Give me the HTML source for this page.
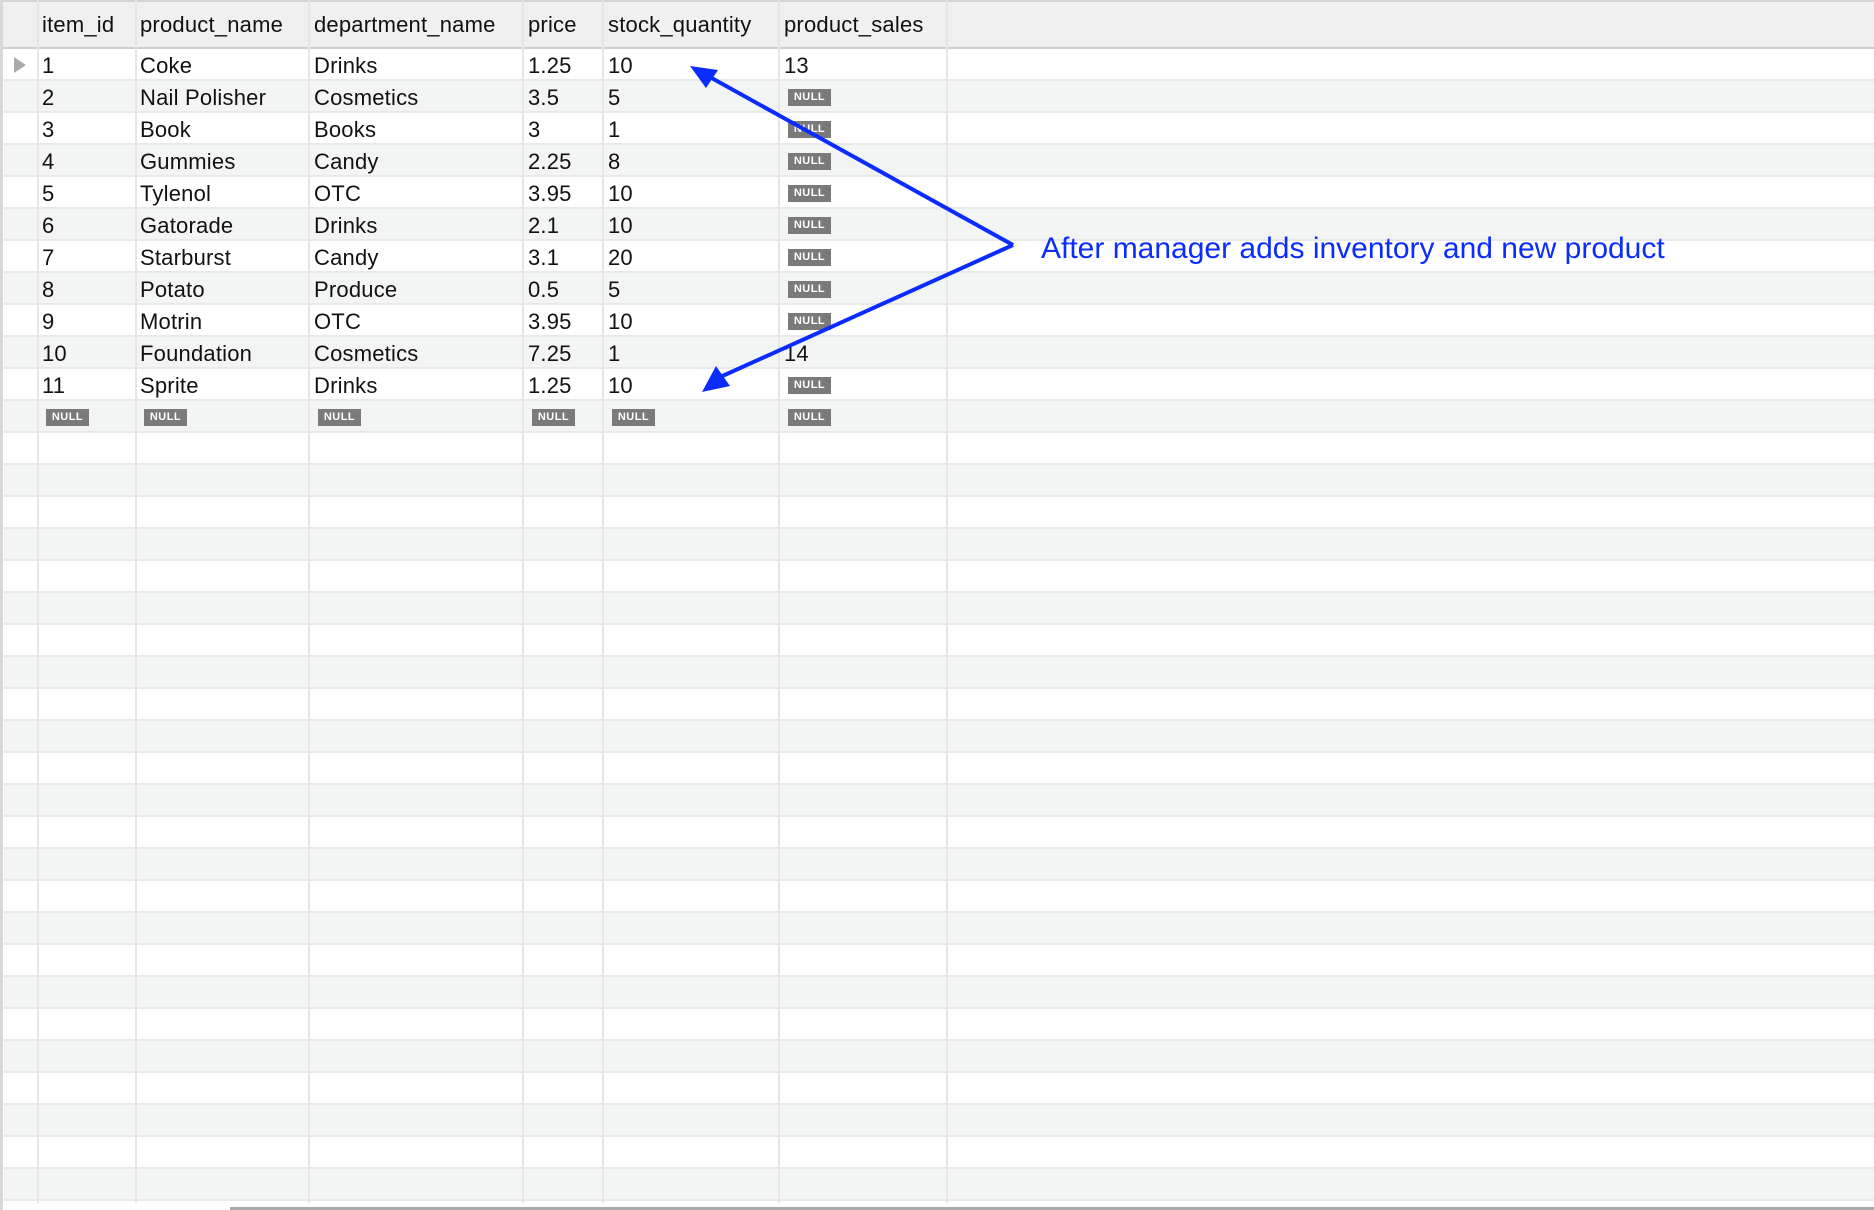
<!DOCTYPE html>
<html><head><meta charset="utf-8"><style>
body{margin:0;width:1874px;height:1210px;background:#fff;position:relative;overflow:hidden;font-family:"Liberation Sans",sans-serif;}
.hdr{position:absolute;left:0;top:0;width:1874px;height:49px;background:#f0f0f0;border-top:2px solid #d4d4d4;border-bottom:2px solid #cfcfcf;box-sizing:border-box}
.row{position:absolute;left:4px;width:1870px;height:32px;box-sizing:border-box;border-bottom:2px solid #e9e9e9}
.vl{position:absolute;width:2px;background:#e6e6e6;top:0}
.t{position:absolute;font-size:22px;color:#111;white-space:nowrap;letter-spacing:0.2px}
.n{position:absolute;background:#7a7a7a;color:#fff;font-size:11px;font-weight:bold;width:43px;height:17px;line-height:17px;text-align:center;letter-spacing:0.5px}
</style></head><body>
<div class="hdr"></div>
<div id="rows"></div>
<script>
var cols=[37,135,308,522,602,778,946];
var xs=[42,140,314,528,608,784];
var h='';
for(var i=0;i<36;i++){h+='<div class="row" style="top:'+(49+32*i)+'px;background:'+(i%2?'#f3f4f4':'#fff')+'"></div>';}
cols.forEach(function(c){h+='<div class="vl" style="left:'+c+'px;height:1203px"></div>';});
var hd=['item_id','product_name','department_name','price','stock_quantity','product_sales'];
hd.forEach(function(t,j){h+='<div class="t" style="left:'+xs[j]+'px;top:12px">'+t+'</div>';});
var d=[[1,'Coke','Drinks','1.25',10,13],[2,'Nail Polisher','Cosmetics','3.5',5,null],[3,'Book','Books','3',1,null],[4,'Gummies','Candy','2.25',8,null],[5,'Tylenol','OTC','3.95',10,null],[6,'Gatorade','Drinks','2.1',10,null],[7,'Starburst','Candy','3.1',20,null],[8,'Potato','Produce','0.5',5,null],[9,'Motrin','OTC','3.95',10,null],[10,'Foundation','Cosmetics','7.25',1,14],[11,'Sprite','Drinks','1.25',10,null],[null,null,null,null,null,null]];
d.forEach(function(r,i){var y=49+32*i;r.forEach(function(v,j){
 if(v===null){h+='<div class="n" style="left:'+(xs[j]+4)+'px;top:'+(y+8)+'px">NULL</div>';}
 else h+='<div class="t" style="left:'+xs[j]+'px;top:'+(y+4)+'px">'+v+'</div>';});});
document.getElementById('rows').innerHTML=h;
</script>
<div style="position:absolute;left:0;top:0;width:3px;height:1210px;background:#d8d8d8"></div>
<div style="position:absolute;left:14px;top:57px;width:0;height:0;border-left:12px solid #aaa;border-top:8px solid transparent;border-bottom:8px solid transparent"></div>
<div style="position:absolute;left:230px;top:1207px;width:1644px;height:3px;background:#aaa"></div>
<svg style="position:absolute;left:0;top:0" width="1874" height="1210">
<line x1="1013" y1="245" x2="708" y2="76" stroke="#0a2cff" stroke-width="4"/>
<line x1="1013" y1="245" x2="718" y2="378" stroke="#0a2cff" stroke-width="4"/>
<polygon points="690,66 718,70 706,88" fill="#0a2cff"/>
<polygon points="702,392 716,366 730,386" fill="#0a2cff"/>
</svg>
<div style="position:absolute;left:1041px;top:232px;font-size:30px;color:#0a2cff;white-space:nowrap">After manager adds inventory and new product</div>
</body></html>
